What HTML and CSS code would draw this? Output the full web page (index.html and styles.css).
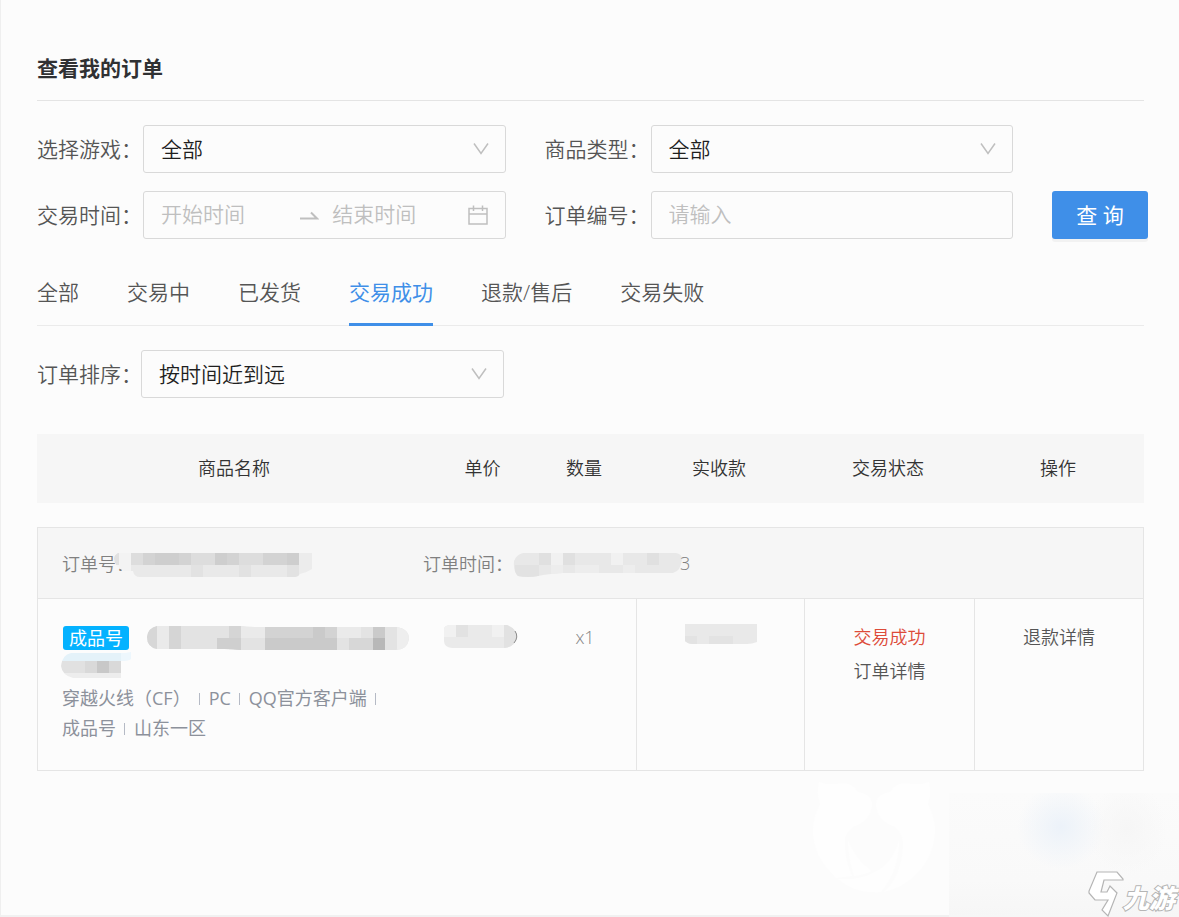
FILE: index.html
```html
<!DOCTYPE html>
<html lang="zh-CN">
<head>
<meta charset="utf-8">
<meta name="viewport" content="width=device-width, initial-scale=1">
<title>查看我的订单</title>
<link rel="stylesheet" href="styles.css">
</head>
<body>
<main class="page">
  <h1 class="title">查看我的订单</h1>

  <form class="filters">
    <div class="field">
      <label class="label" for="game">选择游戏：</label>
      <div class="control">
        <select id="game" class="input"><option>全部</option></select>
        <svg class="chevron" viewBox="0 0 16 14"><path d="M1 1.500L8 11.500L15 1.500"/></svg>
      </div>
    </div>
    <div class="field">
      <label class="label" for="kind">商品类型：</label>
      <div class="control">
        <select id="kind" class="input"><option>全部</option></select>
        <svg class="chevron" viewBox="0 0 16 14"><path d="M1 1.500L8 11.500L15 1.500"/></svg>
      </div>
    </div>
    <div class="field second-row">
      <label class="label" for="start">交易时间：</label>
      <div class="control input range">
        <input id="start" class="date" type="text" placeholder="开始时间">
        <svg class="arrow" viewBox="0 0 20 12"><path d="M1 9.500H18L12 3.500"/></svg>
        <input class="date" type="text" placeholder="结束时间" aria-label="结束时间">
        <svg class="calendar" viewBox="0 0 20 20"><path d="M1 3.500H19V19H1ZM1 9H19M5.500 0.500V6M14.500 0.500V6"/></svg>
      </div>
    </div>
    <div class="field second-row">
      <label class="label" for="number">订单编号：</label>
      <div class="control">
        <input id="number" class="input text" type="text" placeholder="请输入">
      </div>
    </div>
    <button class="search second-row" type="button">查 询</button>
  </form>

  <nav class="tabs">
    <a class="tab" href="#">全部</a>
    <a class="tab" href="#">交易中</a>
    <a class="tab" href="#">已发货</a>
    <a class="tab active" href="#">交易成功</a>
    <a class="tab" href="#">退款/售后</a>
    <a class="tab" href="#">交易失败</a>
  </nav>

  <div class="field sort">
    <label class="label" for="sort">订单排序：</label>
    <div class="control">
      <select id="sort" class="input"><option>按时间近到远</option></select>
      <svg class="chevron" viewBox="0 0 16 14"><path d="M1 1.500L8 11.500L15 1.500"/></svg>
    </div>
  </div>

  <table class="orders">
    <colgroup><col><col class="c-price"><col class="c-count"><col class="c-paid"><col class="c-wide"><col class="c-wide"></colgroup>
    <thead>
      <tr><th>商品名称</th><th>单价</th><th>数量</th><th>实收款</th><th>交易状态</th><th>操作</th></tr>
    </thead>
    <tbody>
      <tr class="summary">
        <td colspan="6">
          <div class="meta">
            <span class="meta-item">订单号：<svg class="mask mask-number" width="198" height="28" viewBox="0 0 198 28">
              <clipPath id="m1"><path d="M4 2H198V18Q192 22 186 23Q184 26 180 26H26Q20 26 19 20H10Q1 16 0 8Q0 4 4 2Z"/></clipPath>
              <g clip-path="url(#m1)"><path fill="#f3f3f3" d="M0 0H17V28H0Z"/><path fill="#e1e1e1" d="M0 0H5V14H0Z"/><path fill="#d3d3d3" d="M17 2H185V14H17Z"/><path fill="#ddd" d="M17 2H29V14H17ZM77 2H101V14H77ZM125 2H149V14H125Z"/><path fill="#cecece" d="M41 2H65V14H41ZM101 2H113V14H101ZM173 2H185V14H173Z"/><path fill="#e9e9e9" d="M17 14H185V28H17Z"/><path fill="#e2e2e2" d="M77 14H89V28H77ZM125 14H137V28H125ZM173 14H185V28H173Z"/><path fill="#ececec" d="M185 0H198V28H185Z"/></g>
            </svg></span>
            <span class="meta-item">订单时间：<svg class="mask mask-time" width="170" height="28" viewBox="0 0 170 28">
              <clipPath id="m2"><path d="M10 2H163Q169 3 169 8Q168 20 160 22H50Q34 23 25 25Q15 27 5 25Q0 20 1 10Q4 3 10 2Z"/></clipPath>
              <g clip-path="url(#m2)"><path fill="#e8e8e8" d="M0 0H170V28H0Z"/><path fill="#e0e0e0" d="M26 2H38V14H26ZM50 2H62V14H50ZM134 2H146V14H134Z"/><path fill="#e2e2e2" d="M2 14H26V28H2Z"/><path fill="#f1f1f1" d="M38 2H50V14H38ZM98 2H110V14H98Z"/><path fill="#ededed" d="M38 14H50V28H38ZM62 14H86V28H62ZM110 14H122V28H110Z"/></g>
            </svg>3</span>
          </div>
        </td>
      </tr>
      <tr class="detail">
        <td class="product">
          <div class="name">
            <span class="badge">成品号</span>
            <svg class="mask" width="262" height="26" viewBox="0 0 262 26">
              <clipPath id="m3"><path d="M10 1H93Q99 2 108 2H250Q262 4 262 14Q260 25 249 25H94Q86 24 77 24H10Q0 22 0 12Q1 3 10 1Z"/></clipPath>
              <g clip-path="url(#m3)"><path fill="#e3e3e3" d="M0 0H262V26H0Z"/><path fill="#d5d5d5" d="M22 1H34V25H22ZM82 1H94V25H82Z"/><path fill="#cfcfcf" d="M70 13H94V25H70Z"/><path fill="#eaeaea" d="M10 1H22V25H10ZM94 1H118V13H94ZM190 1H214V13H190Z"/><path fill="#d3d3d3" d="M118 1H190V13H118Z"/><path fill="#cacaca" d="M118 13H190V25H118ZM166 1H178V13H166ZM226 1H238V13H226Z"/><path fill="#b8b8b8" d="M226 13H238V25H226Z"/><path fill="#d7d7d7" d="M0 1H10V25H0ZM202 13H226V25H202Z"/><path fill="#eee" d="M250 1H262V25H250Z"/></g>
            </svg>
          </div>
          <svg class="mask mask-second" width="72" height="28" viewBox="0 0 72 28">
            <clipPath id="m4"><path d="M10 2H64L70 1V8Q68 10 60 10V27H12Q1 24 0 15Q1 4 10 2Z"/></clipPath>
            <g clip-path="url(#m4)"><path fill="#e4f2f9" d="M0 0H60V10H0Z"/><path fill="#edf7fd" d="M60 0H72V10H60Z"/><path fill="#e1e1e1" d="M0 10H24V22H0Z"/><path fill="#d9d9d9" d="M24 10H36V22H24ZM48 10H60V22H48Z"/><path fill="#c8c8c8" d="M36 10H48V22H36Z"/><path fill="#ededed" d="M0 22H60V28H0Z"/></g>
          </svg>
          <p class="spec">穿越火线（CF）<i class="bar"></i>PC<i class="bar"></i>QQ官方客户端<i class="bar"></i><br>成品号<i class="bar"></i>山东一区</p>
        </td>
        <td class="price">
          <svg class="mask" width="74" height="24" viewBox="0 0 74 24">
            <clipPath id="m5"><path d="M5 0H63Q73 4 73 12Q71 22 60 23H8Q0 22 0 16V4Q0 1 5 0Z"/></clipPath>
            <g clip-path="url(#m5)"><path fill="#eaeaea" d="M0 0H74V24H0Z"/><path fill="#f1f1f1" d="M0 0H12V12H0ZM48 0H60V12H48Z"/><path fill="#e2e2e2" d="M12 0H24V12H12ZM60 0H74V24H60Z"/></g>
            <path fill="none" stroke="#8c8c8c" d="M71 6Q75 12 70 18"/>
          </svg>
        </td>
        <td class="count">x1</td>
        <td class="line">
          <svg class="mask" width="72" height="20" viewBox="0 0 72 20"><path fill="#e9e9e9" d="M0 0H72V18Q67 20 62 20H8Q3 20 0 17Z"/><path fill="#e3e3e3" d="M0 12H12V20H8Q3 20 0 17ZM24 12H48V20H24Z"/></svg>
        </td>
        <td class="line"><span class="success">交易成功</span><a class="link" href="#">订单详情</a></td>
        <td class="line"><a class="link" href="#">退款详情</a></td>
      </tr>
    </tbody>
  </table>

  <div class="watermark">
    <div class="haze"></div>
    <svg class="art" width="367" height="137" viewBox="0 0 367 137">
      <g fill="#fefefe">
        <path d="M7 2Q15 5 24 4Q40 1 46 12Q59 14 60 23Q60 40 43 46Q36 50 33 58Q32 78 40 96L24 98Q0 76 1 48Q2 35 8 24Q4 12 7 2Z"/>
        <path d="M117 2Q109 5 100 4Q84 1 78 12Q65 14 64 23Q64 40 81 46Q90 52 91 62Q91 94 72 112Q96 106 110 88Q123 71 123 48Q122 35 116 24Q120 12 117 2Z"/>
        <path d="M36 60Q36 78 42 96Q52 95 60 91Q44 80 36 60ZM87 60Q82 80 65 91Q48 101 26 99Q43 114 69 112Q87 91 87 60Z"/>
      </g>
      <path fill="#fff" stroke="#b5b5b5" stroke-width="1.200" d="M285 92H305L311 99V100H292L289 112H295L298 106L305 113L296 136L290 130L296 120H283L277 113V111Z"/>
    </svg>
    <span class="brand">九游</span>
  </div>
</main>
</body>
</html>
```
FILE: styles.css
```css
* { box-sizing: border-box; }

body {
  margin: 0;
  background: #fcfcfc;
  color: #555;
  font-family: "Open Sans", "Noto Sans CJK SC", sans-serif;
  font-size: 21px;
  font-weight: 350;
}

input, select, button { font: inherit; }

a { color: inherit; text-decoration: none; }

.page {
  position: relative;
  min-height: 100vh;
  padding: 52px 35px 144px 36px;
  border-left: 1px solid #efefef;
  border-bottom: 2px solid #f1f1f1;
}

.title {
  margin: 0 0 24px;
  padding-bottom: 16px;
  border-bottom: 1px solid #e4e4e4;
  color: #303133;
  font-size: 21px;
  font-weight: 700;
  line-height: 32px;
}

.filters {
  display: grid;
  grid-template-columns: minmax(0, 1fr) minmax(0, 1fr) 96px;
  gap: 18px 39px;
  margin-right: -4px;
}

.second-row { grid-row: 2; }

.field { display: flex; align-items: center; min-width: 0; }

.label { flex: 0 0 106px; min-width: 0; line-height: 48px; white-space: nowrap; }

.control { position: relative; flex: 1; min-width: 0; }

.input {
  display: block;
  width: 100%;
  height: 48px;
  padding: 0 17px;
  border: 1px solid #d9d9d9;
  border-radius: 3px;
  outline: 0;
  background: transparent;
  color: #1f1f1f;
  appearance: none;
}

.text { padding-bottom: 2px; }

::placeholder { color: #bfbfbf; opacity: 1; }

.chevron, .arrow, .calendar { fill: none; stroke: #bfbfbf; stroke-width: 2; }

.chevron {
  position: absolute;
  top: 17px;
  right: 17px;
  width: 16px;
  height: 14px;
  stroke-width: 1.5;
  pointer-events: none;
}

.range { display: flex; align-items: center; }

.date {
  flex: 1;
  min-width: 0;
  padding: 0 0 2px;
  border: 0;
  outline: 0;
  background: transparent;
}

.arrow { flex: none; width: 20px; height: 12px; margin: 0 13px 0 3px; }

.calendar { flex: none; width: 20px; height: 20px; stroke-width: 1.5; }

.search {
  height: 48px;
  padding: 0 0 3px;
  border: 0;
  border-radius: 3px;
  background: #3f8fe8;
  box-shadow: 0 3px 0 #f2f2f2;
  color: #fff;
  font-weight: 400;
}

.tabs {
  display: flex;
  gap: 48px;
  margin-top: 27px;
  border-bottom: 1px solid #ebebeb;
}

.tab {
  margin-bottom: -1px;
  padding-bottom: 5px;
  border-bottom: 3px solid transparent;
  line-height: 52px;
}

.tab.active { border-color: #3f8fe8; color: #3f8fe8; font-weight: 400; }

.sort { width: 467px; max-width: 100%; margin: 24px 0 36px; }

.sort .label { flex-basis: 104px; }

.orders {
  width: 100%;
  border-spacing: 0;
  table-layout: fixed;
  font-size: 18px;
}

.c-price { width: 101px; }
.c-count { width: 102px; }
.c-paid { width: 168px; }
.c-wide { width: 170px; }

.orders th {
  height: 69px;
  padding: 0 2px 3px 0;
  background: #f6f6f6;
  color: #333;
  font-weight: 350;
}

.orders thead::after { content: ""; display: block; height: 24px; }

.summary td {
  height: 72px;
  padding: 0 24px;
  border: 1px solid #e5e5e5;
  background: #f6f6f6;
  color: #808080;
}

.meta { display: flex; align-items: center; }

.meta-item { display: flex; align-items: center; flex: none; height: 28px; }

.meta-item:first-child { width: 361px; }

.mask { display: block; flex: none; }

.meta .mask { margin-top: 4px; }

.mask-number { margin-left: -20px; }

.mask-time { margin-right: -3px; }

.detail td {
  height: 172px;
  padding: 25px 0 0;
  border-bottom: 1px solid #e5e5e5;
  text-align: center;
  vertical-align: top;
  line-height: 26px;
}

.detail .mask { margin: 0 auto; }

.detail .price { padding: 26px 6px 0 0; }

.detail .line { border-left: 1px solid #e5e5e5; }

.detail td:last-child { border-right: 1px solid #e5e5e5; }

.detail .product {
  padding: 26px 24px 26px;
  border-left: 1px solid #e5e5e5;
  text-align: left;
}

.name { display: flex; align-items: center; gap: 18px; }

.detail .name .mask { margin: 0; }

.badge {
  flex: none;
  margin-left: 1px;
  padding: 0 6px;
  border-radius: 3px;
  background: #04b2ff;
  color: #fff;
  font-weight: 400;
  line-height: 24px;
}

.detail .mask-second { margin: 0 0 4px -1px; }

.spec { margin: 0; color: #8c919b; font-weight: 400; line-height: 30px; white-space: nowrap; }

.bar {
  display: inline-block;
  width: 1px;
  height: 12px;
  margin: 0 9px 0 8px;
  background: #b5bac5;
}

.count { color: #858585; }

.success, .link { display: block; }

.success { margin-bottom: 8px; color: #dd4b39; }

.watermark {
  position: absolute;
  right: 0;
  bottom: -2px;
  width: 367px;
  height: 137px;
  overflow: hidden;
  pointer-events: none;
}

.haze {
  position: absolute;
  inset: 13px 0 0 137px;
  background:
    radial-gradient(ellipse 44px 42px at 112px 34px, #ecf2f9, transparent),
    radial-gradient(ellipse 40px 46px at 178px 36px, #f6f6f6, transparent),
    linear-gradient(#fbfbfb, #f9f9f9 70%, #f6f6f6);
}

.art { position: absolute; inset: 0; }

.brand {
  position: absolute;
  right: 4px;
  bottom: 3px;
  color: #fff;
  font-size: 26px;
  font-style: italic;
  font-weight: 900;
  line-height: 32px;
  -webkit-text-stroke: 2px #b5b5b5;
  paint-order: stroke fill;
}
```
